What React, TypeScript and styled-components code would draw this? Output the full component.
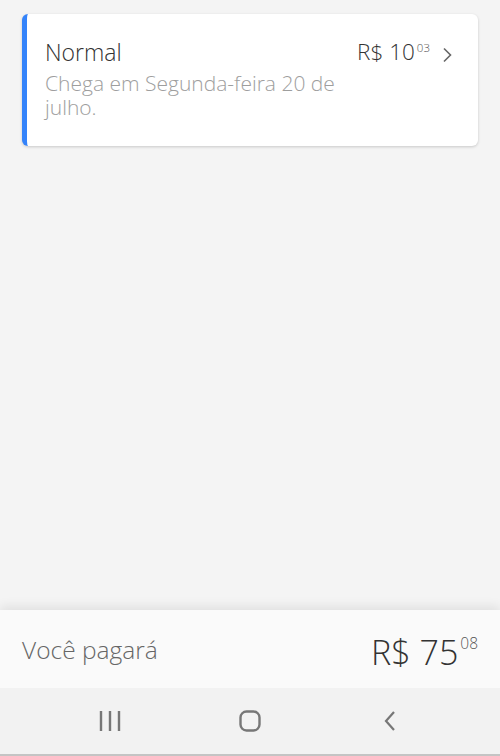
import React from 'react';
import styled, {createGlobalStyle} from 'styled-components';

const GlobalStyle = createGlobalStyle`
  html, body {
    margin: 0;
    padding: 0;
    background: #f4f4f4;
  }
  * { box-sizing: border-box; }
`

const Screen = styled.div`
  width: 500px;
  height: 756px;
  display: flex;
  flex-direction: column;
  background: #f4f4f4;
  font-family: "Open Sans", "Liberation Sans", sans-serif;
  font-weight: 300;
  overflow: hidden;
`

const Content = styled.div`
  flex: 1;
  padding: 14px 22px 0 22px;
`

const Card = styled.div`
  display: flex;
  background: #fff;
  border-radius: 6px;
  border-left: 5px solid #3483fa;
  box-shadow: 0 1px 3px rgba(0, 0, 0, 0.18);
  height: 132px;
  padding: 22px 26px 0 18px;
`

const CardBody = styled.div`
  flex: 1;
  display: flex;
  flex-direction: column;
`

const Title = styled.div`
  font-size: 23px;
  color: #333;
  line-height: 32px;
  margin-bottom: 4px;
`

const Subtitle = styled.div`
  font-size: 21px;
  color: #9e9e9e;
  line-height: 23.5px;
  width: 300px;
`

const PriceRow = styled.div`
  display: flex;
  align-items: flex-start;
  height: 30px;
  color: #333;
`

const Price = styled.span<{$size: number}>`
  font-size: ${p => p.$size}px;
  line-height: 1;
  margin-top: 5px;
`

const Cents = styled.sup<{$size: number}>`
  font-size: ${p => p.$size}px;
  vertical-align: top;
  line-height: 1;
  margin-left: 2px;
  margin-top: 6px;
  color: #555;
`

const Chevron = styled.svg`
  margin-left: 12px;
  margin-top: 11px;
`

const Footer = styled.div`
  display: flex;
  align-items: center;
  justify-content: space-between;
  height: 78px;
  padding: 0 22px;
  background: #fafafa;
  box-shadow: 0 -4px 10px rgba(0, 0, 0, 0.08);
`

const FooterLabel = styled.span`
  font-size: 24.5px;
  color: #666;
`

const Total = styled.div`
  display: flex;
  align-items: flex-start;
  color: #333;
`

const NavBar = styled.div`
  height: 68px;
  display: grid;
  grid-template-columns: repeat(3, 1fr);
  align-items: center;
  justify-items: center;
  background: #f2f2f2;
  border-bottom: 2px solid #c4c4c4;
  padding: 0 40px;
`

export default function App(): React.ReactElement {
  return (
    <Screen>
      <GlobalStyle />
      <Content>
        <Card>
          <CardBody>
            <Title>Normal</Title>
            <Subtitle>Chega em Segunda-feira 20 de julho.</Subtitle>
          </CardBody>
          <PriceRow>
            <Price $size={22.5}>R$ 10</Price>
            <Cents $size={11.5}>03</Cents>
            <Chevron width="10" height="16" viewBox="0 0 10 16">
              <path d="M2 1.5 L8.5 8 L2 14.5" fill="none" stroke="#666" strokeWidth="1.6" />
            </Chevron>
          </PriceRow>
        </Card>
      </Content>
      <Footer>
        <FooterLabel>Você pagará</FooterLabel>
        <Total>
          <Price $size={34}>R$ 75</Price>
          <Cents $size={15.5}>08</Cents>
        </Total>
      </Footer>
      <NavBar>
        <svg width="22" height="22" viewBox="0 0 22 22">
          <path d="M2 1 V21 M11 1 V21 M20 1 V21" stroke="#777" strokeWidth="2.4" />
        </svg>
        <svg width="22" height="22" viewBox="0 0 22 22">
          <rect x="1.5" y="1.5" width="19" height="19" rx="6" fill="none" stroke="#777" strokeWidth="2.4" />
        </svg>
        <svg width="12" height="22" viewBox="0 0 12 22">
          <path d="M10 2 L2 11 L10 20" fill="none" stroke="#777" strokeWidth="2.2" />
        </svg>
      </NavBar>
    </Screen>
  );
}
